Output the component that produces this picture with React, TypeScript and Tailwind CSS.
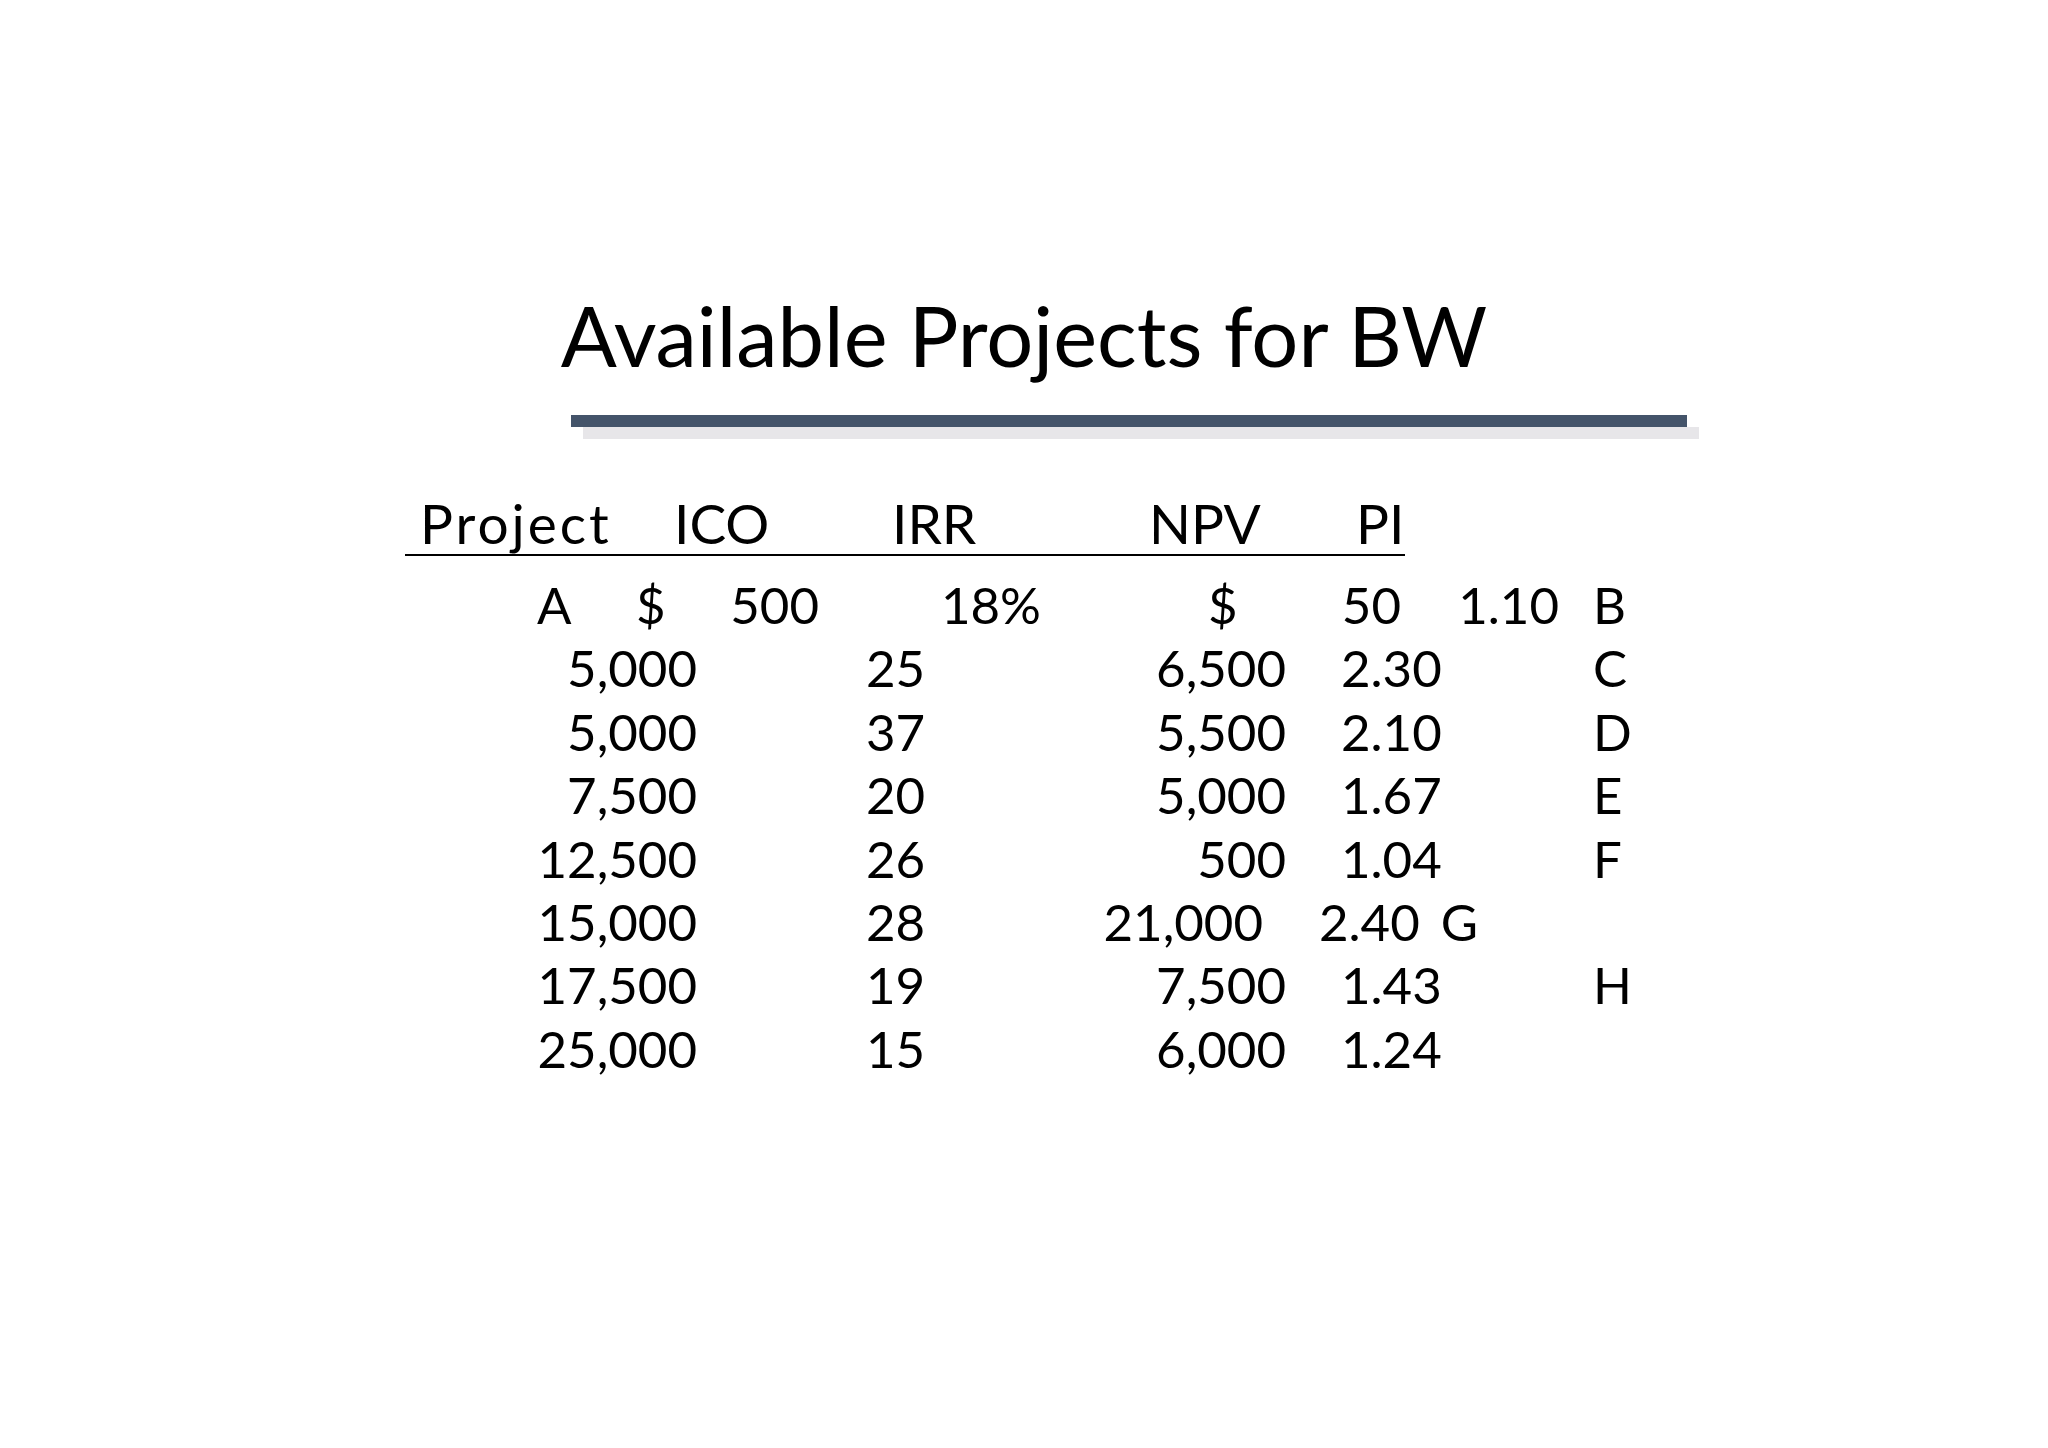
const rows = [
  { ico: "5,000", irr: "25", npv: "6,500", pi: "2.30", tag: "C" },
  { ico: "5,000", irr: "37", npv: "5,500", pi: "2.10", tag: "D" },
  { ico: "7,500", irr: "20", npv: "5,000", pi: "1.67", tag: "E" },
  { ico: "12,500", irr: "26", npv: "500", pi: "1.04", tag: "F" },
  { ico: "15,000", irr: "28", npv: "21,000", pi: "2.40", tag: "G", shifted: true },
  { ico: "17,500", irr: "19", npv: "7,500", pi: "1.43", tag: "H" },
  { ico: "25,000", irr: "15", npv: "6,000", pi: "1.24", tag: "" },
];

function DataRow({ ico, irr, npv, pi, tag, shifted }: (typeof rows)[number]) {
  return (
    <div className="grid h-[63.4px] grid-cols-[292px_369px_220px_307px_auto] whitespace-nowrap">
      <span className="text-right">{ico}</span>
      <span className="pl-[169px]">{irr}</span>
      <span className={shifted ? "pr-[23px] text-right" : "text-right"}>{npv}</span>
      {shifted ? (
        <span className="flex pl-[33px]">
          <span>{pi}</span>
          <span className="ml-[21px]">{tag}</span>
        </span>
      ) : (
        <span className="pl-[55px]">{pi}</span>
      )}
      <span>{shifted ? "" : tag}</span>
    </div>
  );
}

export default function App() {
  return (
    <div className="h-[1448px] w-full overflow-hidden bg-white pt-[294px] font-['Lato','Liberation_Sans',sans-serif] text-black">
      <h1 className="text-center text-[83px] font-normal leading-none">Available Projects for BW</h1>

      <div className="ml-[571px] mt-[38px] h-[12px] w-[1116px] bg-[#44546a] shadow-[12px_12px_0_0_#e7e6e9]" />

      <div className="ml-[405px] mt-[65px] text-[51px] leading-[63.4px]">
        <div className="grid h-[64px] w-[1000px] grid-cols-[269px_218px_257px_207px_auto] border-b-2 border-black text-[55px]">
          <span className="pl-[15px] tracking-[3px]">Project</span>
          <span>ICO</span>
          <span>IRR</span>
          <span>NPV</span>
          <span>PI</span>
        </div>

        <div className="mt-[17px]">
          <div className="grid h-[63.4px] grid-cols-[231px_183px_222px_360px_158px_auto] whitespace-nowrap">
            <span className="pl-[132px]">A</span>
            <span className="flex justify-between">
              <span>$</span>
              <span>500</span>
            </span>
            <span className="text-right">18%</span>
            <span className="flex justify-between pl-[167px]">
              <span>$</span>
              <span>50</span>
            </span>
            <span className="text-right">1.10</span>
            <span className="pl-[34px]">B</span>
          </div>
          {rows.map((r, i) => (
            <DataRow key={i} {...r} />
          ))}
        </div>
      </div>
    </div>
  );
}
